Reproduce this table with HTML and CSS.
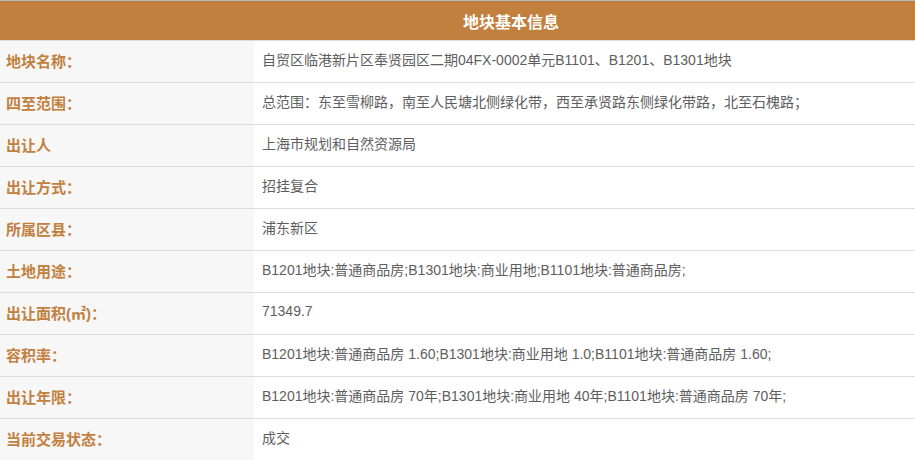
FILE: index.html
```html
<!DOCTYPE html>
<html lang="zh">
<head>
<meta charset="utf-8">
<link rel="stylesheet" href="styles.css">
</head>
<body>
<div class="page">
  <div class="title">地块基本信息</div>
  <div class="grid">
    <div class="label">地块名称：</div><div class="value">自贸区临港新片区奉贤园区二期04FX-0002单元B1101、B1201、B1301地块</div>
    <div class="label">四至范围：</div><div class="value">总范围：东至雪柳路，南至人民塘北侧绿化带，西至承贤路东侧绿化带路，北至石槐路；</div>
    <div class="label">出让人</div><div class="value">上海市规划和自然资源局</div>
    <div class="label">出让方式：</div><div class="value">招挂复合</div>
    <div class="label">所属区县：</div><div class="value">浦东新区</div>
    <div class="label">土地用途：</div><div class="value">B1201地块:普通商品房;B1301地块:商业用地;B1101地块:普通商品房;</div>
    <div class="label">出让面积(㎡)：</div><div class="value">71349.7</div>
    <div class="label">容积率：</div><div class="value">B1201地块:普通商品房 1.60;B1301地块:商业用地 1.0;B1101地块:普通商品房 1.60;</div>
    <div class="label">出让年限：</div><div class="value">B1201地块:普通商品房 70年;B1301地块:商业用地 40年;B1101地块:普通商品房 70年;</div>
    <div class="label">当前交易状态：</div><div class="value">成交</div>
  </div>
</div>
</body>
</html>
```

FILE: styles.css
```css
html, body {
  margin: 0;
  padding: 0;
  background: #ffffff;
  overflow: hidden;
}
.page {
  width: 1022px;
  border-top: 1px solid #b9b9b9;
  font-family: "Liberation Sans", "Noto Sans CJK SC", sans-serif;
}
.title {
  height: 39px;
  display: flex;
  align-items: center;
  justify-content: center;
  background: #c2803f;
  color: #ffffff;
  font-size: 16px;
  font-weight: bold;
}
.grid {
  display: grid;
  grid-template-columns: 254px 1fr;
  grid-auto-rows: 42px;
}
.label,
.value {
  display: flex;
  align-items: center;
  box-sizing: border-box;
  border-top: 1px solid #dddddd;
}
.label {
  padding-left: 6px;
  padding-bottom: 2px;
  background: #f7f7f7;
  color: #c2803f;
  font-size: 15px;
  font-weight: bold;
}
.value {
  padding-left: 8px;
  padding-bottom: 5px;
  color: #5e5e5e;
  font-size: 14px;
  white-space: nowrap;
}
.grid > :nth-last-child(-n+2) {
  border-bottom: 1px solid #dddddd;
  height: 43px;
}
```
